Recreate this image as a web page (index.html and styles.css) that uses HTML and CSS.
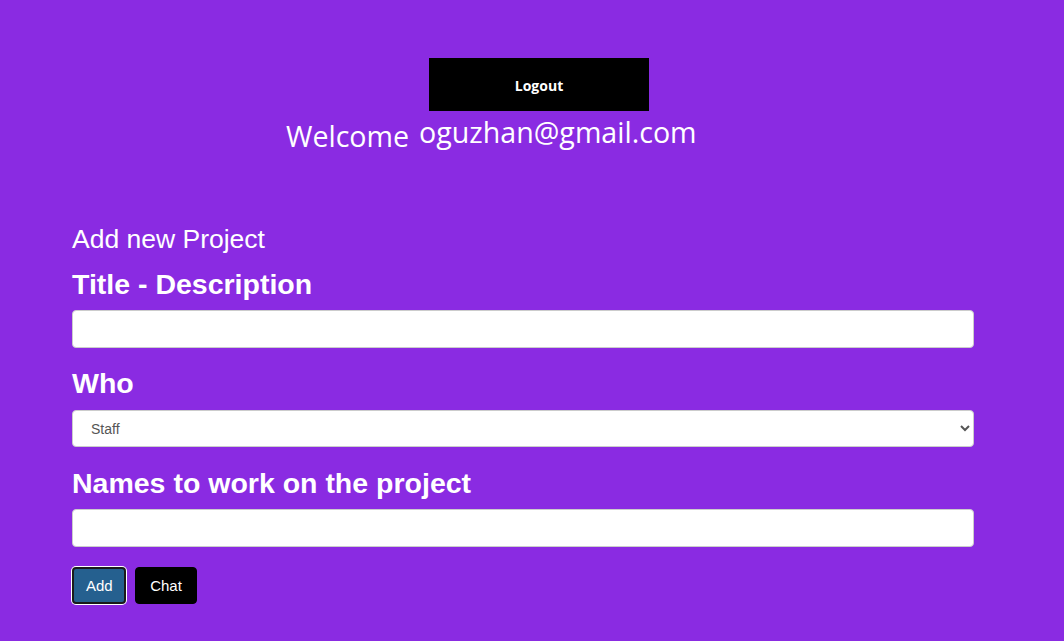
FILE: index.html
```html
<!DOCTYPE html>
<html>
<head>
<meta charset="utf-8">
<link rel="stylesheet" href="styles.css">
</head>
<body>
<div class="page">
  <header class="top">
    <button class="logout">Logout</button>
    <div class="welcome">
      <span class="welcome-word">Welcome</span>
      <span class="email">oguzhan@gmail.com</span>
    </div>
  </header>
  <main class="form">
    <div class="form-title">Add new Project</div>
    <label class="label">Title - Description</label>
    <input class="field" type="text">
    <label class="label">Who</label>
    <select class="field select">
      <option>Staff</option>
    </select>
    <label class="label label-names">Names to work on the project</label>
    <input class="field" type="text">
    <div class="actions">
      <button class="btn btn-add">Add</button>
      <button class="btn btn-chat">Chat</button>
    </div>
  </main>
</div>
</body>
</html>
```

FILE: styles.css
```css
html, body {
  margin: 0;
  padding: 0;
  background: #8a2be2;
  height: 100%;
}
body {
  font-family: "Liberation Sans", Arial, sans-serif;
  color: #fff;
}
.page {
  display: flex;
  flex-direction: column;
}
.top {
  display: flex;
  flex-direction: column;
  padding-top: 58px;
}
.logout {
  margin-left: 429px;
  width: 220px;
  height: 53px;
  background: #000;
  color: #fff;
  border: none;
  font-family: "Open Sans", sans-serif;
  font-weight: 700;
  font-size: 14px;
  padding: 2px 0 0;
}
.welcome {
  display: flex;
  align-items: baseline;
  margin-left: 286px;
  margin-top: 1px;
  font-family: "Open Sans", sans-serif;
  height: 40px;
}
.welcome-word {
  font-size: 28.6px;
  position: relative;
  top: 4px;
}
.email {
  font-size: 28.6px;
  margin-left: 10px;
}
.form {
  display: flex;
  flex-direction: column;
  padding: 0 90px 0 72px;
  margin-top: 72px;
}
.form-title {
  font-size: 26.5px;
  line-height: 30px;
}
.label {
  font-size: 28.5px;
  font-weight: 700;
  line-height: 33px;
  margin-top: 19px;
}
.form-title + .label {
  margin-top: 14px;
}
.label-names {
  margin-top: 20px;
}
.field {
  margin-top: 9px;
  height: 38px;
  box-sizing: border-box;
  border: 1px solid #ccc;
  border-radius: 4px;
  background: #fff;
  font-family: "Liberation Sans", Arial, sans-serif;
  font-size: 14px;
  padding: 6px 12px;
}
.select {
  margin-top: 10px;
  height: 37px;
  color: #555;
  padding-left: 14px;
}
.actions {
  display: flex;
  gap: 9px;
  margin-top: 20px;
}
.btn {
  height: 37px;
  border-radius: 4px;
  color: #fff;
  font-family: "Liberation Sans", Arial, sans-serif;
  font-size: 15px;
  padding: 0 12px;
  border: 1px solid #000;
}
.btn-add {
  background: #25608f;
  width: 54px;
  border: 2px solid #1a1a1a;
  box-shadow: 0 0 0 1px #fff;
}
.btn-chat {
  background: #000;
  width: 62px;
}
```
